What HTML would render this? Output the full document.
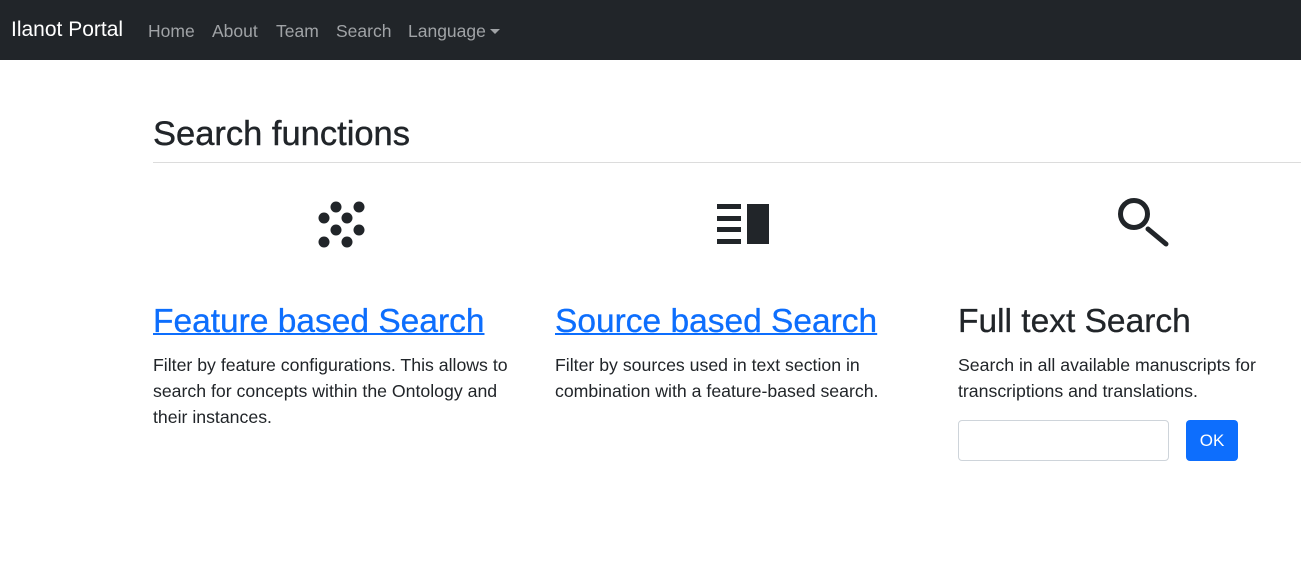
<!DOCTYPE html>
<html><head><style>
body{margin:0;font-family:"Liberation Sans",sans-serif;color:#212529;background:#fff;width:1301px;height:565px;overflow:hidden}
nav{height:60px;background:#212529;position:relative}
nav .brand{position:absolute;left:11px;top:18px;font-size:21px;color:#fff}
nav .links{position:absolute;top:21px;font-size:17.5px;color:#a0a3a6}
.caret{display:inline-block;border-left:5px solid transparent;border-right:5px solid transparent;border-top:5px solid #a0a3a6;vertical-align:3px;margin-left:4px}
h1{position:absolute;left:153px;top:115px;margin:0;font-size:34.5px;font-weight:normal;-webkit-text-stroke:0.4px #212529}
.hr{position:absolute;left:153px;top:162px;width:1148px;height:1px;background:#dcdcdc}
.col{position:absolute;top:300px;width:360px}
.col h2{margin:0;font-size:33.5px;font-weight:normal;line-height:44px;-webkit-text-stroke:0.3px}
.col h2 a{color:#0d6efd;text-decoration:underline;text-decoration-thickness:2px}
.col p{margin:8px 0 0;font-size:17.7px;line-height:26px}
input{position:absolute;left:958px;top:420px;width:209px;height:39px;border:1px solid #ced4da;border-radius:4px;margin:0;padding:0}
button{position:absolute;left:1186px;top:420px;width:52px;height:41px;border:0;border-radius:4px;background:#0d6efd;color:#fff;font-size:17px;font-family:"Liberation Sans",sans-serif}
</style></head><body>
<nav><div class="brand">Ilanot Portal</div>
<span class="links" style="left:148px">Home</span>
<span class="links" style="left:212px">About</span>
<span class="links" style="left:276px">Team</span>
<span class="links" style="left:336px">Search</span>
<span class="links" style="left:408px">Language<i class="caret"></i></span></nav>
<h1>Search functions</h1><div class="hr"></div>
<svg width="1301" height="565" style="position:absolute;left:0;top:0">
<g fill="#212529">
<circle cx="336" cy="207" r="5.5"/><circle cx="359" cy="207" r="5.5"/>
<circle cx="324" cy="218" r="5.5"/><circle cx="347" cy="218" r="5.5"/>
<circle cx="336" cy="230" r="5.5"/><circle cx="359" cy="230" r="5.5"/>
<circle cx="324" cy="242" r="5.5"/><circle cx="347" cy="242" r="5.5"/>
<rect x="717" y="204" width="24" height="5"/><rect x="717" y="216" width="24" height="5"/>
<rect x="717" y="227" width="24" height="5"/><rect x="717" y="239" width="24" height="5"/>
<rect x="747" y="204" width="22" height="40"/>
</g>
<circle cx="1134" cy="214" r="13.5" fill="none" stroke="#212529" stroke-width="5"/>
<line x1="1148" y1="229" x2="1166" y2="244" stroke="#212529" stroke-width="5" stroke-linecap="round"/>
</svg>
<div class="col" style="left:153px"><h2><a>Feature based Search</a></h2><p>Filter by feature configurations. This allows to search for concepts within the Ontology and their instances.</p></div>
<div class="col" style="left:555px"><h2><a>Source based Search</a></h2><p>Filter by sources used in text section in combination with a feature-based search.</p></div>
<div class="col" style="left:958px;width:320px"><h2>Full text Search</h2><p>Search in all available manuscripts for transcriptions and translations.</p></div>
<input type="text"><button>OK</button>
</body></html>
